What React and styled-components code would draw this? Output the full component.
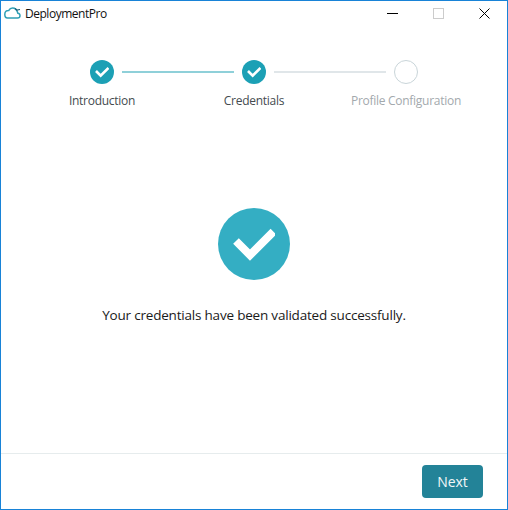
import React from 'react';
import styled, { createGlobalStyle } from 'styled-components';

const GlobalStyle = createGlobalStyle`
  html, body {
    margin: 0;
    padding: 0;
    background: #fff;
  }
`;

const Window = styled.div`
  box-sizing: border-box;
  width: 508px;
  height: 510px;
  display: flex;
  flex-direction: column;
  border: 1px solid #1883d7;
  background: #fff;
  font-family: "Open Sans", "Liberation Sans", sans-serif;
`;

const TitleBar = styled.div`
  height: 24px;
  display: flex;
  align-items: center;
  padding-left: 3px;
`;

const AppTitle = styled.div`
  margin-left: 4px;
  font-size: 12px;
  letter-spacing: -0.48px;
  color: #111;
`;

const WindowControls = styled.div`
  margin-left: auto;
  display: flex;
  align-items: center;
`;

const ControlButton = styled.div`
  width: 46px;
  height: 24px;
  display: flex;
  align-items: center;
  justify-content: center;
`;

const Rail = styled.div`
  display: flex;
  align-items: center;
  margin-top: 35px;
  padding-left: 89px;
`;

const StepCircle = styled.div`
  box-sizing: border-box;
  width: 24px;
  height: 24px;
  border-radius: 50%;
  flex: none;
  display: flex;
  align-items: center;
  justify-content: center;
  background: ${(props) => (props.$done ? '#1ca0b5' : '#fff')};
  border: ${(props) => (props.$done ? 'none' : '1px solid #c9d5d9')};
`;

const Connector = styled.div`
  width: 112px;
  height: 2px;
  margin: 0 8px;
  background: ${(props) => (props.$done ? '#8fd0d9' : '#e0e6e9')};
`;

const StepLabels = styled.div`
  display: grid;
  grid-template-columns: repeat(3, 152px);
  margin-top: 8px;
  padding-left: 25px;
`;

const StepLabel = styled.div`
  text-align: center;
  font-size: 12px;
  line-height: 18px;
  letter-spacing: -0.28px;
  color: ${(props) => (props.$muted ? '#a3a9ad' : '#444b50')};
`;

const Content = styled.div`
  flex: 1;
  display: flex;
  flex-direction: column;
  align-items: center;
  padding-top: 98px;
`;

const SuccessBadge = styled.div`
  width: 72px;
  height: 72px;
  border-radius: 50%;
  background: #34aec3;
  display: flex;
  align-items: center;
  justify-content: center;
`;

const Message = styled.div`
  margin-top: 25px;
  font-size: 13.5px;
  line-height: 20px;
  letter-spacing: -0.2px;
  color: #1a1a1a;
`;

const Footer = styled.div`
  box-sizing: border-box;
  height: 56px;
  display: flex;
  align-items: flex-start;
  justify-content: flex-end;
  padding: 11px 24px 0 0;
  border-top: 1px solid #e6eced;
`;

const NextButton = styled.button`
  width: 61px;
  height: 33px;
  padding: 0;
  border: none;
  border-radius: 4px;
  background: #238398;
  color: #f2f7f8;
  font-family: inherit;
  font-size: 14px;
`;

const Check = ({ size }) => (
  <svg width={size} height={size} viewBox="0 0 24 24" fill="none">
    <path d="M1.700 10.300 9.700 18.300 23.100 4.900" stroke="#fff" strokeWidth="4.570" />
  </svg>
);

const CloudLogo = () => (
  <svg width="17" height="12" viewBox="0 0 17 12" fill="none">
    <path
      d="M3.500 11h10c1.400 0 2.500-1 2.500-2.300 0-1.200-.9-2.200-2.100-2.400C13.200 3.500 11 1 8.500 1 6.800 1 5.500 2 4.800 3.400 2.500 3.200.800 4.800.800 7.200c0 2.200 1.100 3.800 2.700 3.800Z"
      stroke="#2f9fb5"
      strokeWidth="1.500"
    />
    <path d="M11 1.500l1.800 1.500 3.200-.5" stroke="#1d5f78" strokeWidth="1.200" />
  </svg>
);

const steps = [
  { label: 'Introduction', done: true },
  { label: 'Credentials', done: true },
  { label: 'Profile Configuration', done: false },
];

const App = () => {
  return (
    <>
      <GlobalStyle />
      <Window>
        <TitleBar>
          <CloudLogo />
          <AppTitle>DeploymentPro</AppTitle>
          <WindowControls>
            <ControlButton>
              <svg width="11" height="11" viewBox="0 0 11 11">
                <path d="M0 5.500h11" stroke="#000" />
              </svg>
            </ControlButton>
            <ControlButton>
              <svg width="11" height="11" viewBox="0 0 11 11">
                <rect x="0.500" y="0.500" width="10" height="10" fill="none" stroke="#ccc" />
              </svg>
            </ControlButton>
            <ControlButton>
              <svg width="11" height="11" viewBox="0 0 11 11">
                <path d="M0.500 0.500l10 10M10.500 0.500l-10 10" stroke="#000" />
              </svg>
            </ControlButton>
          </WindowControls>
        </TitleBar>

        <Rail>
          {steps.map((step, i) => (
            <React.Fragment key={step.label}>
              <StepCircle $done={step.done}>{step.done && <Check size={14} />}</StepCircle>
              {i < steps.length - 1 && <Connector $done={steps[i + 1].done} />}
            </React.Fragment>
          ))}
        </Rail>
        <StepLabels>
          {steps.map((step) => (
            <StepLabel key={step.label} $muted={!step.done}>{step.label}</StepLabel>
          ))}
        </StepLabels>

        <Content>
          <SuccessBadge>
            <Check size={42} />
          </SuccessBadge>
          <Message>Your credentials have been validated successfully.</Message>
        </Content>

        <Footer>
          <NextButton>Next</NextButton>
        </Footer>
      </Window>
    </>
  );
};

export default App;
